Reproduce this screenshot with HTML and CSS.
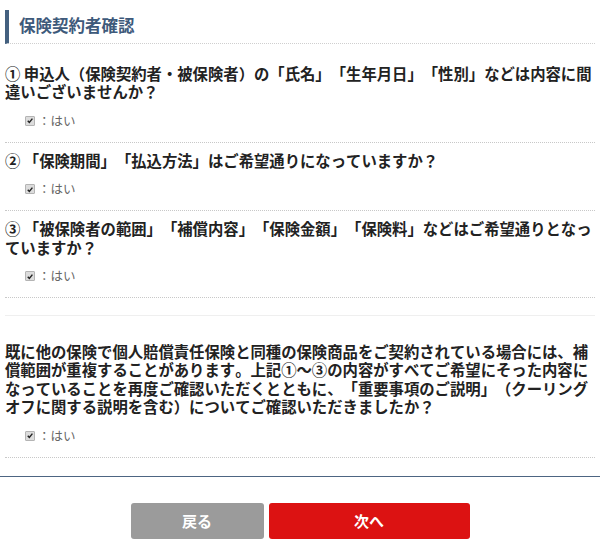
FILE: index.html
```html
<!DOCTYPE html>
<html lang="ja">
<head>
<meta charset="utf-8">
<title>保険契約者確認</title>
<link rel="stylesheet" href="styles.css">
</head>
<body>
<main class="page">
  <h2 class="section-title">保険契約者確認</h2>

  <div class="question first">
    <p class="q-text">① 申込人（保険契約者・被保険者）の「氏名」「生年月日」「性別」などは内容に間違いございませんか？</p>
    <div class="answer"><span class="check"><svg viewBox="0 0 10 10" width="10" height="10"><path d="M2.2 5.2 L4.2 7.4 L8 2.6" fill="none" stroke="#222" stroke-width="1.8"/></svg></span><span class="answer-label">：はい</span></div>
  </div>

  <div class="question">
    <p class="q-text">② 「保険期間」「払込方法」はご希望通りになっていますか？</p>
    <div class="answer"><span class="check"><svg viewBox="0 0 10 10" width="10" height="10"><path d="M2.2 5.2 L4.2 7.4 L8 2.6" fill="none" stroke="#222" stroke-width="1.8"/></svg></span><span class="answer-label">：はい</span></div>
  </div>

  <div class="question">
    <p class="q-text">③ 「被保険者の範囲」「補償内容」「保険金額」「保険料」などはご希望通りとなっていますか？</p>
    <div class="answer"><span class="check"><svg viewBox="0 0 10 10" width="10" height="10"><path d="M2.2 5.2 L4.2 7.4 L8 2.6" fill="none" stroke="#222" stroke-width="1.8"/></svg></span><span class="answer-label">：はい</span></div>
  </div>

  <div class="spacer-row"></div>

  <div class="question notice">
    <p class="q-text">既に他の保険で個人賠償責任保険と同種の保険商品をご契約されている場合には、補償範囲が重複することがあります。上記①～③の内容がすべてご希望にそった内容になっていることを再度ご確認いただくとともに、「重要事項のご説明」（クーリングオフに関する説明を含む）についてご確認いただきましたか？</p>
    <div class="answer"><span class="check"><svg viewBox="0 0 10 10" width="10" height="10"><path d="M2.2 5.2 L4.2 7.4 L8 2.6" fill="none" stroke="#222" stroke-width="1.8"/></svg></span><span class="answer-label">：はい</span></div>
  </div>
</main>

<footer class="actions">
  <button class="btn btn-back" type="button">戻る</button>
  <button class="btn btn-next" type="button">次へ</button>
</footer>
</body>
</html>
```

FILE: styles.css
```css
* { box-sizing: border-box; }

html, body {
  margin: 0;
  padding: 0;
  background: #fff;
}

body {
  font-family: "Noto Sans CJK JP", "Noto Sans", sans-serif;
  color: #222;
  text-spacing-trim: space-all;
  font-kerning: none;
}

.page {
  padding: 10px 5px 0;
}

.section-title {
  margin: 0 0 12px;
  height: 34px;
  padding-left: 10px;
  border-left: 4px solid #44607f;
  border-bottom: 1px dotted #cfcfcf;
  font-size: 16.5px;
  font-weight: 700;
  line-height: 31px;
  color: #3e5a7b;
}

.question {
  padding: 8px 0 12px;
  border-bottom: 1px dotted #c8c8c8;
}

.q-text {
  margin: 0;
  font-size: 15.35px;
  font-weight: 700;
  line-height: 18.4px;
  color: #222;
}

.answer {
  display: flex;
  align-items: center;
  height: 18px;
  margin-top: 11px;
  padding-left: 20px;
}

.check {
  display: inline-flex;
  width: 10px;
  height: 10px;
  background: #dcdcdc;
  border: 1px solid #b4b4b4;
  border-radius: 1px;
  align-items: center;
  justify-content: center;
}

.check svg {
  display: block;
  width: 9px;
  height: 9px;
}

.answer-label {
  margin-left: 3px;
  font-size: 12.5px;
  color: #666;
  line-height: 18px;
}

.spacer-row {
  height: 18px;
  border-bottom: 1px solid #efefef;
}

.question.notice {
  padding-top: 26px;
}

.actions {
  margin-top: 18px;
  border-top: 1px solid #4d6582;
  padding-top: 26px;
  display: flex;
  justify-content: center;
  gap: 5px;
}

.btn {
  height: 36px;
  border: none;
  border-radius: 3px;
  color: #fff;
  font-family: "Noto Sans CJK JP", "Noto Sans", sans-serif;
  font-size: 15px;
  font-weight: 700;
  cursor: pointer;
}

.btn-back {
  width: 133px;
  background: #9b9b9b;
}

.btn-next {
  width: 201px;
  background: #dc1212;
}
```
